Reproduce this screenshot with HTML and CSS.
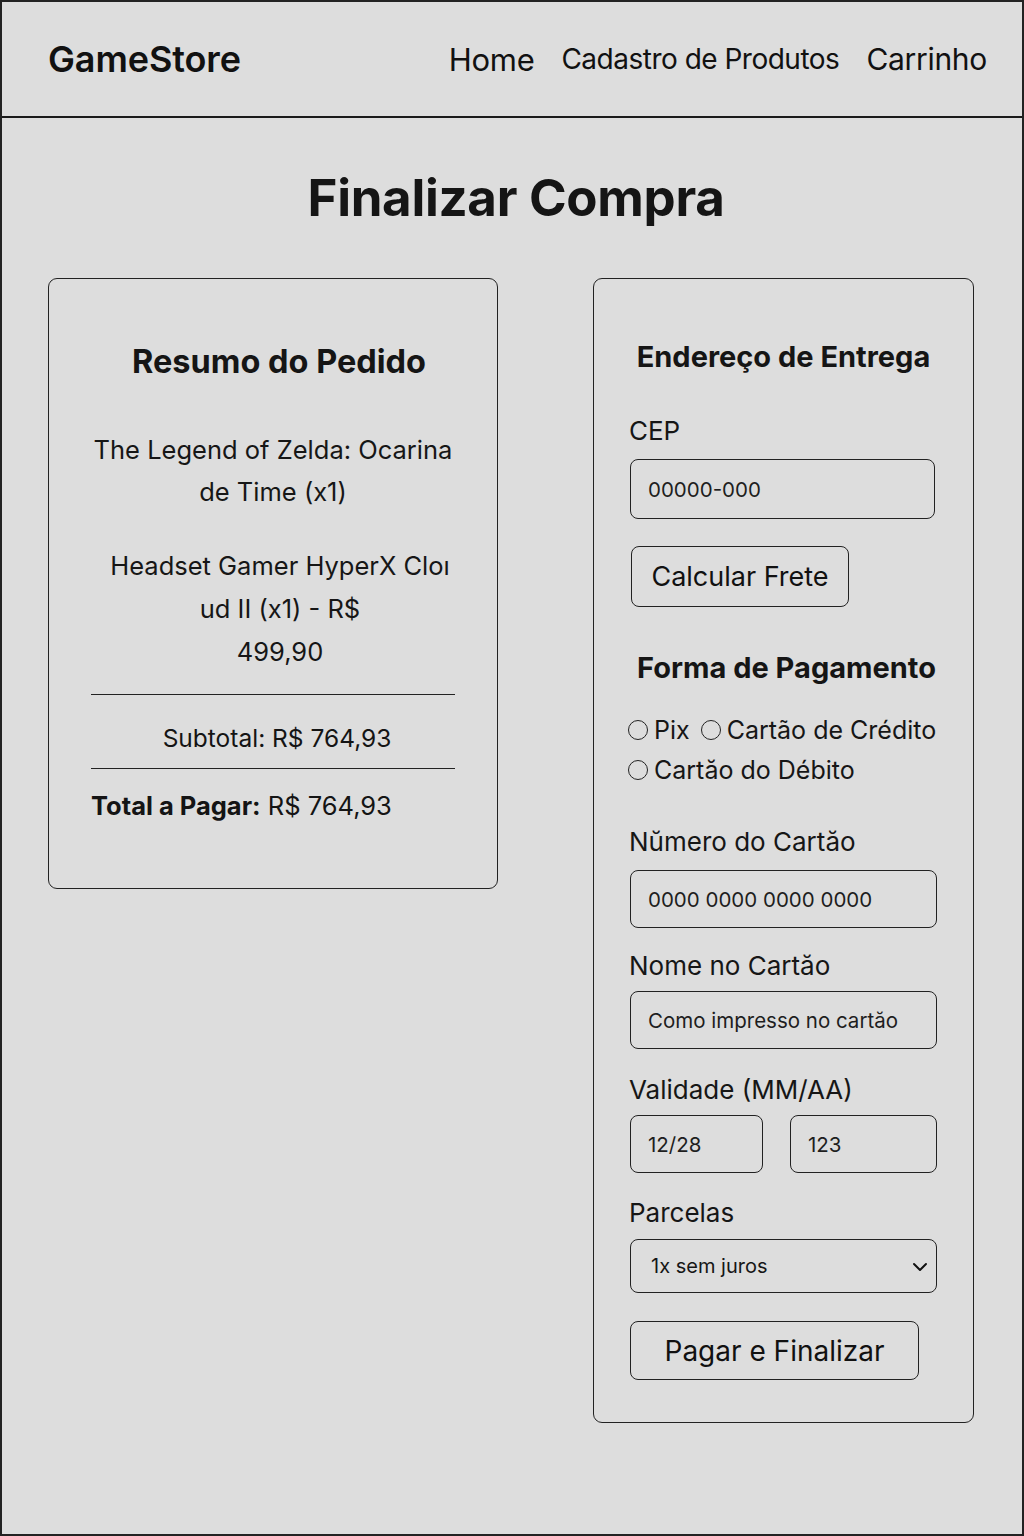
FILE: index.html
```html
<!DOCTYPE html>
<html lang="pt-BR">
<head>
<meta charset="utf-8">
<title>GameStore - Finalizar Compra</title>
<link rel="stylesheet" href="styles.css">
</head>
<body>
<div class="page">
  <header class="topbar">
    <div class="brand">GameStore</div>
    <nav class="nav">
      <a class="nav-link" href="#">Home</a>
      <a class="nav-link nav-narrow" href="#">Cadastro de Produtos</a>
      <a class="nav-link" href="#">Carrinho</a>
    </nav>
  </header>

  <h1 class="page-title">Finalizar Compra</h1>

  <main class="columns">
    <section class="card summary">
      <h2 class="summary-title">Resumo do Pedido</h2>
      <p class="item item-1">The Legend of Zelda: Ocarina<br>de Time (x1)</p>
      <p class="item item-2">Headset Gamer HyperX Cloı<br>ud II (x1) - R$<br>499,90</p>
      <hr class="rule rule-1">
      <p class="subtotal">Subtotal: R$ 764,93</p>
      <hr class="rule rule-2">
      <p class="total"><strong>Total a Pagar:</strong> R$ 764,93</p>
    </section>

    <section class="card checkout">
      <h2 class="form-title">Endereço de Entrega</h2>
      <label class="label label-cep">CEP</label>
      <input class="field field-cep" type="text" placeholder="00000-000">
      <button class="btn btn-frete" type="button">Calcular Frete</button>

      <h2 class="form-title title-pay">Forma de Pagamento</h2>
      <div class="radios">
        <div class="radio-row">
          <label class="radio"><input type="radio" name="pay"><span>Pix</span></label>
          <label class="radio"><input type="radio" name="pay"><span>Cartão de Crédito</span></label>
        </div>
        <div class="radio-row">
          <label class="radio"><input type="radio" name="pay"><span>Cartăo do Débito</span></label>
        </div>
      </div>

      <label class="label label-num">Nŭmero do Cartăo</label>
      <input class="field field-num" type="text" placeholder="0000 0000 0000 0000">

      <label class="label label-name">Nome no Cartăo</label>
      <input class="field field-name" type="text" placeholder="Como impresso no cartăo">

      <label class="label label-val">Validade (MM/AA)</label>
      <div class="split">
        <input class="field field-small field-exp" type="text" placeholder="12/28">
        <input class="field field-small field-cvv" type="text" placeholder="123">
      </div>

      <label class="label label-parc">Parcelas</label>
      <div class="select-wrap">
        <select class="field select">
          <option>1x sem juros</option>
        </select>
        <svg class="chevron" width="16" height="10" viewBox="0 0 16 10" aria-hidden="true">
          <path d="M2 2 L8 8 L14 2" fill="none" stroke="#111" stroke-width="2" stroke-linecap="round" stroke-linejoin="round"/>
        </svg>
      </div>

      <button class="btn btn-pay" type="button">Pagar e Finalizar</button>
    </section>
  </main>
</div>
</body>
</html>
```

FILE: styles.css
```css
* { box-sizing: border-box; }

html, body {
  margin: 0;
  padding: 0;
  background: #dcdcdc;
}

body {
  font-family: Inter, "Noto Sans", "Liberation Sans", sans-serif;
  color: #141414;
}

.page {
  width: 1024px;
  min-height: 1536px;
  border: 2px solid #222;
  background: #dddddd;
}

/* Header */
.topbar {
  height: 116px;
  display: flex;
  align-items: center;
  justify-content: space-between;
  padding: 0 35px 0 46px;
  border-bottom: 2px solid #1a1a1a;
}

.brand {
  font-size: 36px;
  font-weight: 600;
  letter-spacing: -0.1px;
  color: #111;
}

.nav {
  display: flex;
  align-items: center;
  gap: 27px;
}

.nav-link {
  font-size: 30px;
  color: #111;
  text-decoration: none;
  letter-spacing: -0.3px;
}

.nav-link:first-child {
  font-size: 31px;
}

.nav-narrow {
  font-size: 28px;
  letter-spacing: -0.5px;
}

/* Title */
.page-title {
  margin: 50px 0 0;
  padding-left: 8px;
  text-align: center;
  font-size: 51px;
  line-height: 60px;
  font-weight: 700;
  color: #151515;
  letter-spacing: -0.3px;
}

/* Columns */
.columns {
  display: grid;
  grid-template-columns: 450px 381px;
  column-gap: 95px;
  align-items: start;
  padding: 0 0 0 46px;
  margin-top: 50px;
}

.card {
  border: 1.5px solid #222;
  border-radius: 9px;
}

/* Summary card */
.summary {
  padding: 63px 42px 64px;
}

.summary-title {
  margin: 0;
  padding-left: 12px;
  text-align: center;
  font-size: 32.5px;
  line-height: 40px;
  font-weight: 700;
  color: #151515;
}

.item {
  margin: 0;
  text-align: center;
  font-size: 25.5px;
  color: #161616;
}

.item-1 {
  margin-top: 47px;
  line-height: 42px;
  padding-right: 0;
}

.item-2 {
  margin-top: 31px;
  line-height: 43px;
  padding-left: 14px;
}

.rule {
  border: 0;
  border-top: 1.5px solid #222;
  margin: 0;
}

.rule-1 { margin-top: 21px; }
.rule-2 { margin-top: 12px; }

.subtotal {
  margin: 25px 0 0;
  text-align: center;
  font-size: 24.5px;
  line-height: 36px;
  padding-left: 8px;
}

.total {
  margin: 19px 0 0;
  font-size: 25.5px;
  line-height: 36px;
}

.total strong { font-weight: 700; }

/* Checkout card */
.checkout {
  padding: 60px 36px 42px;
  display: flex;
  flex-direction: column;
  align-items: stretch;
}

.form-title {
  margin: 0;
  text-align: center;
  font-size: 29px;
  line-height: 36px;
  font-weight: 700;
  color: #151515;
}

.title-pay {
  margin-top: 43px;
  padding-left: 6px;
}

.label {
  display: block;
  margin-left: -1px;
  font-size: 26px;
  line-height: 32px;
  color: #161616;
}

.label-cep { margin-top: 40px; }
.label-num { margin-top: 36px; }
.label-name { margin-top: 22px; }
.label-val { margin-top: 25px; }
.label-parc { margin-top: 24px; }

.field {
  display: block;
  width: 100%;
  height: 58px;
  margin: 0;
  padding: 0 17px;
  border: 1.5px solid #222;
  border-radius: 8px;
  background: transparent;
  font-family: Inter, "Noto Sans", "Liberation Sans", sans-serif;
  font-size: 20.5px;
  color: #161616;
  outline: none;
}

.field::placeholder { color: #1e1e1e; opacity: 1; }

.field-cep { margin-top: 12px; height: 60px; width: 305px; }
.field-num { margin-top: 12px; }
.field-name { margin-top: 9px; }

.split {
  margin-top: 9px;
  display: flex;
  justify-content: space-between;
}

.field-small { height: 58px; }
.field-exp { width: 133px; }
.field-cvv { width: 147px; }

.select-wrap {
  position: relative;
  margin-top: 10px;
}

.select {
  height: 54px;
  appearance: none;
  -webkit-appearance: none;
  padding-left: 20px;
  font-size: 20px;
}

.chevron {
  position: absolute;
  right: 9px;
  top: 23px;
}

.btn {
  align-self: flex-start;
  margin: 0;
  border: 1.5px solid #222;
  border-radius: 8px;
  background: transparent;
  font-family: Inter, "Noto Sans", "Liberation Sans", sans-serif;
  color: #111;
  cursor: pointer;
}

.btn-frete {
  margin-top: 27px;
  height: 61px;
  width: 218px;
  margin-left: 1px;
  font-size: 27px;
}

.btn-pay {
  margin-top: 28px;
  height: 59px;
  width: 289px;
  font-size: 28px;
}

/* Radios */
.radios {
  margin-top: 24px;
  margin-left: -2px;
}

.radio-row {
  display: flex;
  align-items: center;
  gap: 11px;
  height: 40px;
}

.radio {
  display: flex;
  align-items: center;
  gap: 6px;
  font-size: 25px;
  color: #161616;
}

.radio input {
  appearance: none;
  -webkit-appearance: none;
  width: 20px;
  height: 20px;
  margin: 0;
  border: 1.5px solid #222;
  border-radius: 50%;
  background: transparent;
}
```
